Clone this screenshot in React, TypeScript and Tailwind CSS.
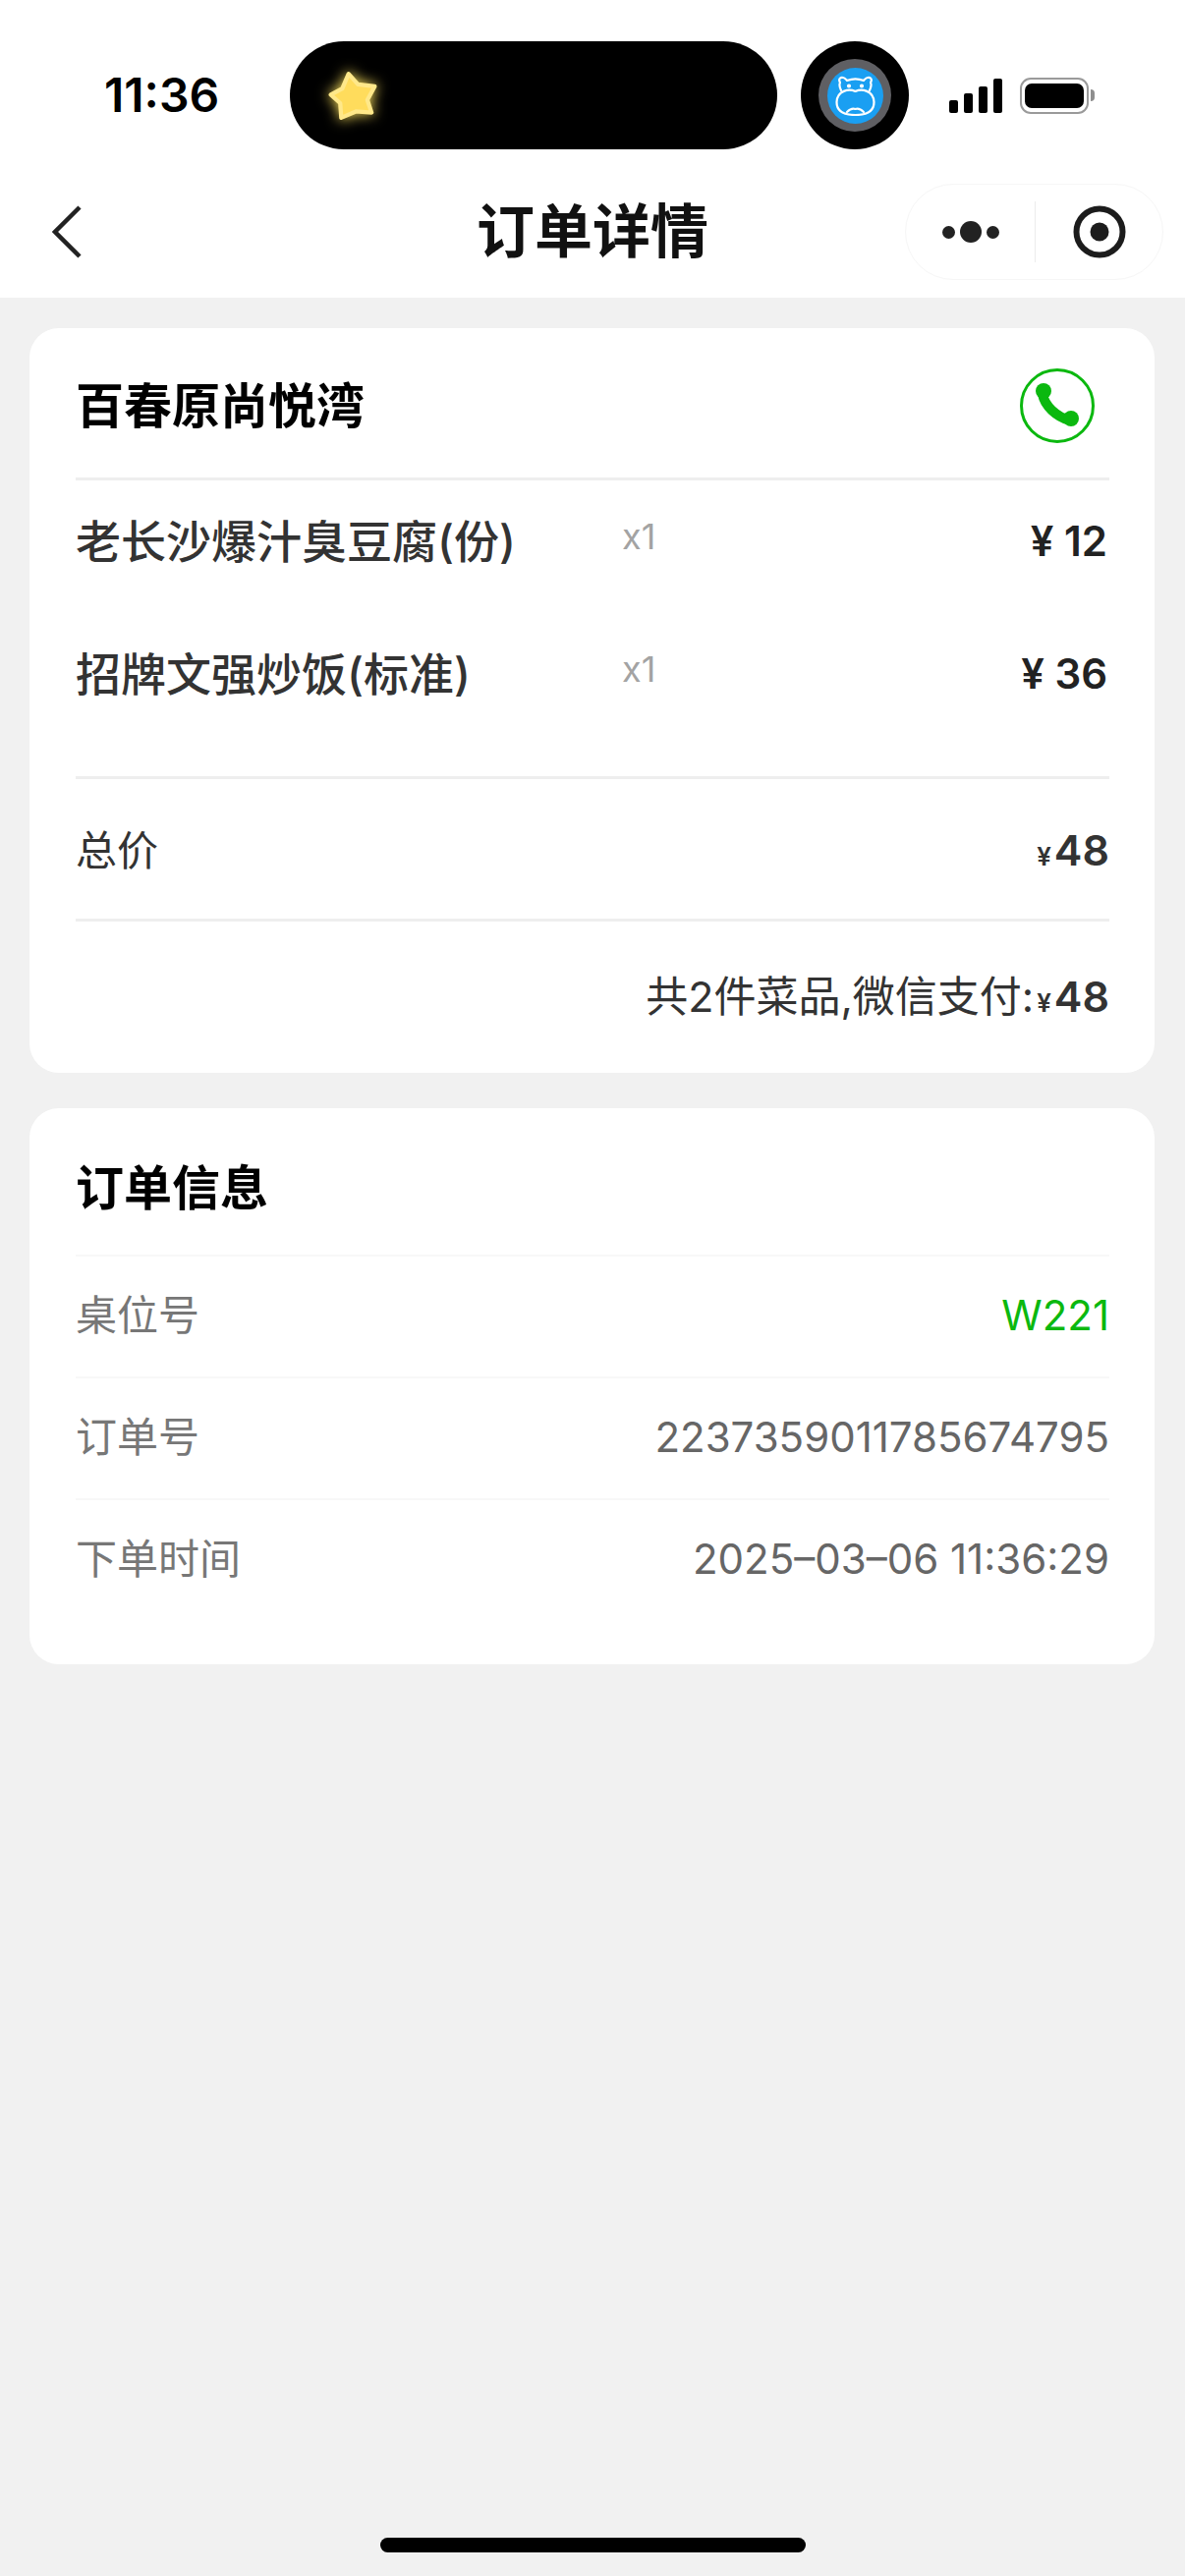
function StarIcon() {
  return (
    <svg width="52" height="50" viewBox="0 0 48 47" className="-ml-[2px] drop-shadow-[0_0_7px_#ffe45e]">
      <path
        d="M20 3 L29 13 L45 15 L38 28 L42 40 L27 39 L13 45 L12 31 L3 23 L14 17 Z"
        fill="#ffdc5c"
        stroke="#ffe88a"
        strokeWidth="4"
        strokeLinejoin="round"
      />
    </svg>
  );
}

function HippoIcon() {
  return (
    <svg width="41" height="41" viewBox="0 0 41 41" fill="none" stroke="#fff" strokeWidth="2.2" strokeLinecap="round" strokeLinejoin="round">
      <path d="M6 15 C4 11 4 9 5 7 C3 4 5 1 8 2 C10 2 11 4 12 5 C17 3 24 3 29 5 C30 4 31 2 33 2 C36 1 38 4 36 7 C37 9 37 11 35 15" />
      <path d="M20.5 16 C14 13 2 15 1.5 27 C1.5 36 9 40 20.5 40 C32 40 39.5 36 39.5 27 C39 15 27 13 20.5 16 Z" />
      <path d="M12 37 C15 34 18 33 20.5 34 C23 33 26 34 29 37" />
      <circle cx="14" cy="10.5" r="1" fill="#fff" />
      <circle cx="27" cy="10.5" r="1" fill="#fff" />
    </svg>
  );
}

function StatusBar() {
  return (
    <div className="flex h-[187px] items-start bg-white pt-[42px]">
      <div className="flex h-[110px] w-[295px] items-center pl-[106px] text-[48px] font-semibold text-black">11:36</div>
      <div className="flex h-[110px] w-[496px] items-center rounded-full bg-black pl-[40px]">
        <StarIcon />
      </div>
      <div className="ml-[24px] flex h-[110px] w-[110px] items-center justify-center rounded-full bg-black">
        <div className="flex h-[74px] w-[74px] items-center justify-center rounded-full bg-[#5f5f63]">
          <div className="flex h-[57px] w-[57px] items-center justify-center rounded-full bg-[#1a9ff2]">
            <HippoIcon />
          </div>
        </div>
      </div>
      <div className="ml-[41px] flex h-[110px] items-center">
        <div className="flex h-[35px] items-end gap-[6px]">
          <div className="h-[13px] w-[9px] rounded-[2px] bg-black" />
          <div className="h-[20px] w-[9px] rounded-[2px] bg-black" />
          <div className="h-[27px] w-[9px] rounded-[2px] bg-black" />
          <div className="h-[35px] w-[9px] rounded-[2px] bg-black" />
        </div>
        <div className="ml-[18px] flex h-[37px] w-[70px] items-center justify-center rounded-[11px] border-[2.5px] border-[#9a9a9a]">
          <div className="h-[25px] w-[60px] rounded-[7px] bg-black" />
        </div>
        <div className="ml-[2px] h-[12px] w-[4px] rounded-r-full bg-[#8e8e8e]" />
      </div>
    </div>
  );
}

function NavBar() {
  return (
    <div className="grid h-[116px] grid-cols-[1fr_auto_1fr] items-start bg-white">
      <div className="flex h-[98px] items-center pl-[53px]">
        <svg width="30" height="54" viewBox="0 0 30 54" fill="none" stroke="#222" strokeWidth="4.5">
          <path d="M28 2 L3 27 L28 52" />
        </svg>
      </div>
      <div className="flex h-[98px] items-center text-[59px] font-semibold text-[#111]">订单详情</div>
      <div className="mr-[22px] flex h-[98px] w-[263px] items-center justify-self-end rounded-full border border-[#f6f6f6]">
        <div className="flex w-[131px] items-center justify-center gap-[5px]">
          <div className="h-[13px] w-[13px] rounded-full bg-[#222]" />
          <div className="h-[22px] w-[22px] rounded-full bg-[#222]" />
          <div className="h-[13px] w-[13px] rounded-full bg-[#222]" />
        </div>
        <div className="h-[62px] w-[1px] bg-[#ececec]" />
        <div className="flex flex-1 items-center justify-center">
          <svg width="54" height="54" viewBox="0 0 54 54">
            <circle cx="27" cy="27" r="23.5" fill="none" stroke="#1c1c1c" strokeWidth="6" />
            <circle cx="27" cy="27" r="9.5" fill="#1c1c1c" />
          </svg>
        </div>
      </div>
    </div>
  );
}

function PhoneIcon() {
  return (
    <svg width="76" height="76" viewBox="0 0 76 76" fill="none" className="mr-[15px] mt-[2px]">
      <circle cx="38" cy="38" r="36.5" stroke="#0bb80f" strokeWidth="3" />
      <path d="M23 26 C25 38 37 49 51 53" stroke="#0bb80f" strokeWidth="10" strokeLinecap="round" />
      <circle cx="24" cy="23" r="8" fill="#0bb80f" />
      <circle cx="52" cy="51" r="8" fill="#0bb80f" />
    </svg>
  );
}

function Divider() {
  return <div className="h-[3px] bg-[#eeeeee]" />;
}

function FoodRow({ name, price }: { name: string; price: string }) {
  return (
    <div className="flex h-[100px] items-center">
      <div className="w-[556px] text-[46px] font-medium text-[#333]">{name}</div>
      <div className="mb-[10px] text-[36px] text-[#a3a3a3]">x1</div>
      <div className="mb-[2px] ml-auto pr-[2px] text-[42px] font-semibold text-[#222]">{price}</div>
    </div>
  );
}

function Amount() {
  return (
    <span className="inline-flex items-baseline font-semibold text-[#333]">
      <span className="mx-[3px] text-[26px]">¥</span>
      <span className="text-[43px]">48</span>
    </span>
  );
}

function InfoRow({ label, value, green }: { label: string; value: string; green?: boolean }) {
  return (
    <div className="flex h-[122px] items-center justify-between pb-[3px] text-[42px]">
      <span className="text-[#777]">{label}</span>
      <span className={green ? "text-[#0bb80f]" : "text-[#666]"}>{value}</span>
    </div>
  );
}

export default function App() {
  return (
    <div className="flex min-h-[2622px] flex-col bg-[#f1f1f1] font-['Inter','Noto_Sans_CJK_SC',sans-serif]">
      <StatusBar />
      <NavBar />

      {/* 商品 */}
      <div className="mt-[31px] ml-[30px] mr-[31px] rounded-[30px] bg-white pl-[47px] pr-[46px]">
        <div className="flex h-[152px] items-center justify-between pt-[4px]">
          <div className="mt-[4px] text-[49px] font-semibold text-black">百春原尚悦湾</div>
          <PhoneIcon />
        </div>
        <Divider />
        <div className="flex flex-col gap-[35px] pt-[12px] pb-[54px]">
          <FoodRow name="老长沙爆汁臭豆腐(份)" price="¥ 12" />
          <FoodRow name="招牌文强炒饭(标准)" price="¥ 36" />
        </div>
        <Divider />
        <div className="flex h-[142px] items-center justify-between pt-[3px] text-[42px] text-[#333]">
          <span>总价</span>
          <Amount />
        </div>
        <Divider />
        <div className="flex h-[154px] items-center justify-end pb-[2px] text-[43px] text-[#333]">
          <span>共2件菜品,微信支付:</span>
          <Amount />
        </div>
      </div>

      {/* 订单信息 */}
      <div className="mt-[36px] ml-[30px] mr-[31px] rounded-[30px] bg-white pl-[47px] pr-[46px] pb-[45px]">
        <div className="flex h-[149px] items-center pt-[15px] text-[49px] font-semibold text-black">订单信息</div>
        <div className="h-[2px] bg-[#f8f8f8]" />
        <InfoRow label="桌位号" value="W221" green />
        <div className="h-[2px] bg-[#f8f8f8]" />
        <InfoRow label="订单号" value="2237359011785674795" />
        <div className="h-[2px] bg-[#f8f8f8]" />
        <InfoRow label="下单时间" value="2025–03–06 11:36:29" />
      </div>

      <div className="mt-auto flex justify-center pb-[24px]">
        <div className="h-[15px] w-[433px] rounded-full bg-black" />
      </div>
    </div>
  );
}
